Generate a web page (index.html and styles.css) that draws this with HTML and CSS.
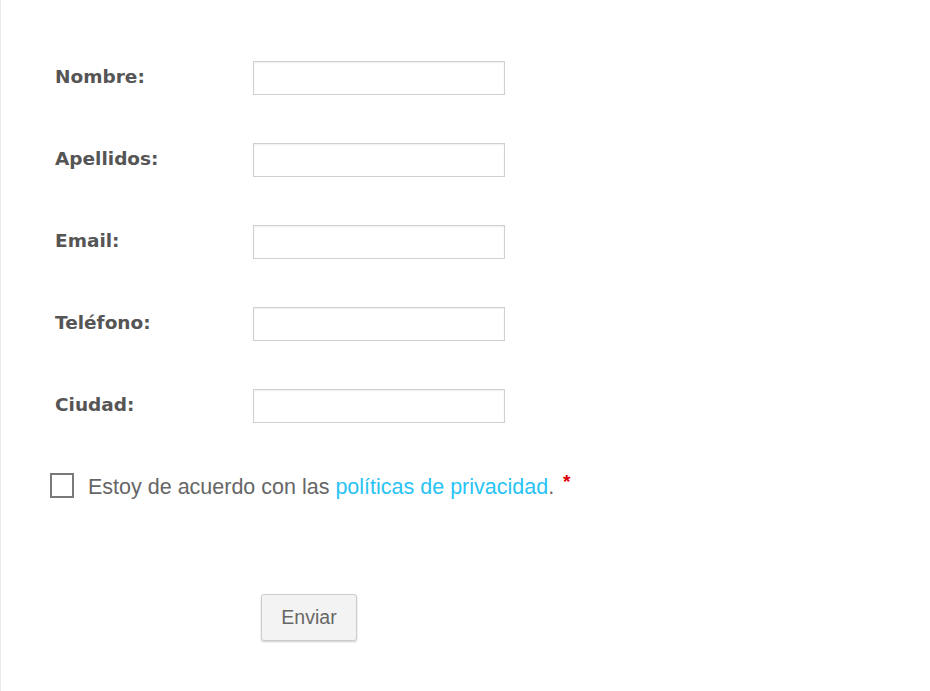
FILE: index.html
```html
<!DOCTYPE html>
<html lang="es">
<head>
<meta charset="utf-8">
<link rel="stylesheet" href="styles.css">
</head>
<body>
<div class="page">
  <form class="form">
    <div class="row"><label class="label">Nombre:</label><input class="field" type="text"></div>
    <div class="row"><label class="label">Apellidos:</label><input class="field" type="text"></div>
    <div class="row"><label class="label">Email:</label><input class="field" type="text"></div>
    <div class="row"><label class="label">Teléfono:</label><input class="field" type="text"></div>
    <div class="row"><label class="label">Ciudad:</label><input class="field" type="text"></div>
    <div class="consent">
      <span class="box"></span>
      <span class="consent-text">Estoy de acuerdo con las <a class="link" href="#">políticas de privacidad</a>. <span class="req">*</span></span>
    </div>
    <div class="actions"><button class="btn" type="button">Enviar</button></div>
  </form>
</div>
</body>
</html>
```
FILE: styles.css
```css
html, body { margin: 0; padding: 0; background: #fff; }
.page {
  height: 691px;
  border-left: 1px solid #ebebeb;
  box-sizing: border-box;
}
.form {
  padding: 61px 0 0 54px;
  display: flex;
  flex-direction: column;
}
.row {
  display: grid;
  grid-template-columns: 198px 252px;
  align-items: center;
  height: 34px;
  margin-bottom: 48px;
}
.label {
  font-family: "DejaVu Sans", Verdana, sans-serif;
  font-weight: bold;
  font-size: 18.5px;
  color: #555;
  margin-top: -4px;
}
.field {
  box-sizing: border-box;
  width: 252px;
  height: 34px;
  margin: 0;
  border: 1px solid #d0d0d0;
  box-shadow: inset 0 1px 2px rgba(0,0,0,0.07);
  background: #fff;
}
.consent {
  display: flex;
  align-items: center;
  margin-top: 2px;
  margin-left: -5px;
  height: 25px;
}
.box {
  box-sizing: border-box;
  width: 24px;
  height: 25px;
  border: 2px solid #7a7a7a;
  background: #fff;
  margin-right: 14px;
  flex: none;
}
.consent-text {
  font-family: "Liberation Sans", Arial, sans-serif;
  font-size: 21.5px;
  color: #666;
  white-space: nowrap;
}
.link { color: #29c3f5; text-decoration: none; }
.req { color: #e00000; font-weight: bold; font-size: 19px; vertical-align: 6px; margin-left: 3px; }
.actions {
  padding-left: 206px;
  margin-top: 96px;
}
.btn {
  width: 96px;
  height: 47px;
  font-family: "Liberation Sans", Arial, sans-serif;
  font-size: 19.5px;
  color: #666;
  background: #f3f3f3;
  border: 1px solid #ccc;
  border-radius: 3px;
  box-shadow: 0 1px 2px rgba(0,0,0,0.2);
}
```
